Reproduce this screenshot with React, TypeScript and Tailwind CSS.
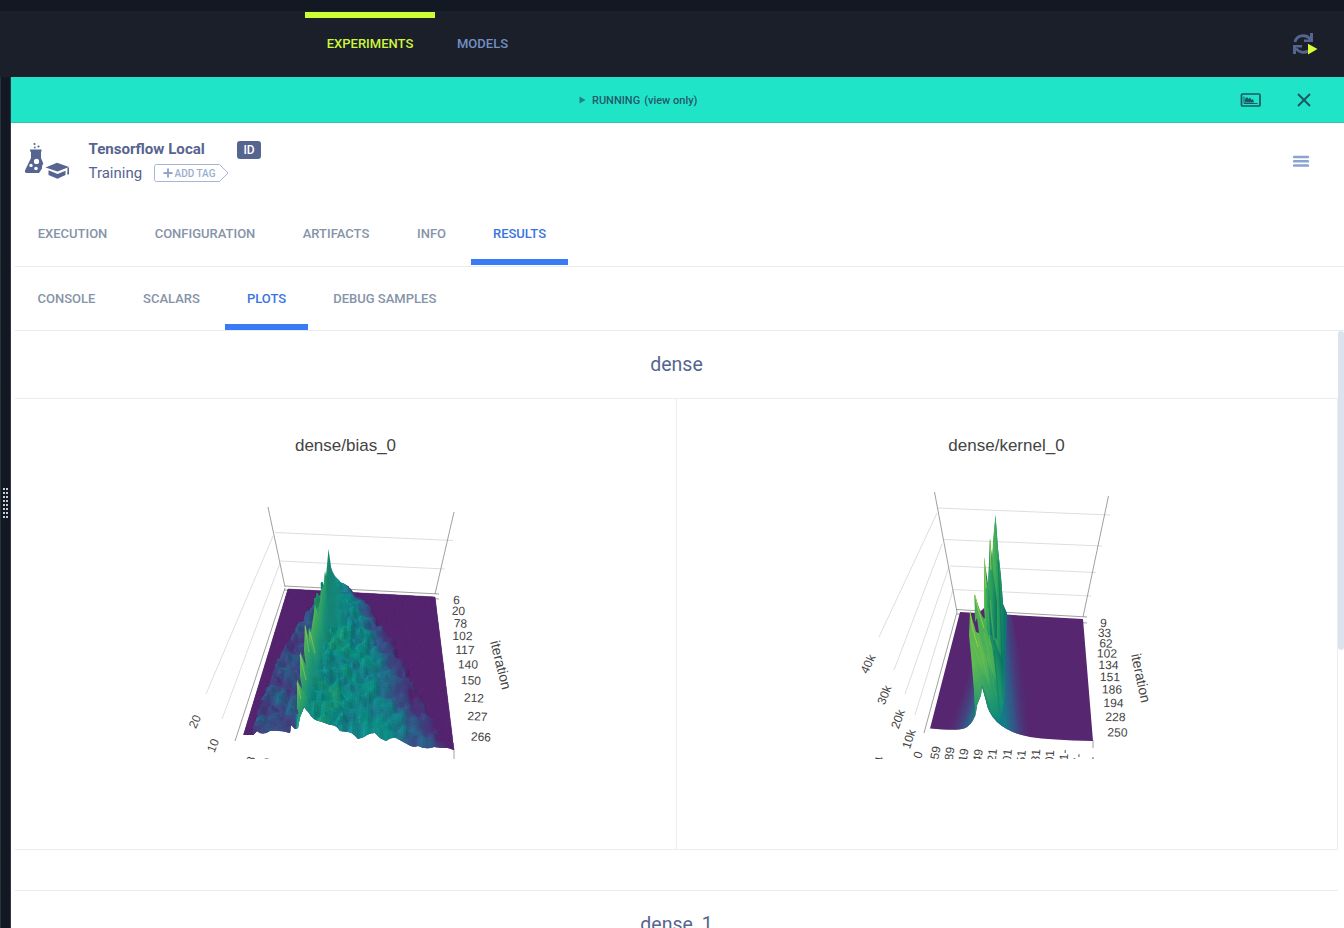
import React from 'react';

type Pt = [number, number];

const hash = (x: number, y: number) => {
  const s = Math.sin(x * 127.1 + y * 311.7) * 43758.5453;
  return s - Math.floor(s);
};
const noise = (x: number, y: number) => {
  const ix = Math.floor(x), iy = Math.floor(y);
  const fx = x - ix, fy = y - iy;
  const a = fx * fx * (3 - 2 * fx), b = fy * fy * (3 - 2 * fy);
  const top = hash(ix, iy) * (1 - a) + hash(ix + 1, iy) * a;
  const bot = hash(ix, iy + 1) * (1 - a) + hash(ix + 1, iy + 1) * a;
  return top * (1 - b) + bot * b;
};
const ramp = (stops: Pt[], x: number) => {
  if (x <= stops[0][0]) return stops[0][1];
  for (let i = 1; i < stops.length; i++) {
    if (x <= stops[i][0]) {
      const f = (x - stops[i - 1][0]) / (stops[i][0] - stops[i - 1][0]);
      return stops[i - 1][1] + f * (stops[i][1] - stops[i - 1][1]);
    }
  }
  return stops[stops.length - 1][1];
};

const SCALE = [[86, 38, 112], [70, 62, 128], [50, 94, 140], [24, 130, 142], [12, 150, 136], [52, 168, 100], [120, 200, 80]];
const color = (v: number, light: number) => {
  const p = Math.max(0, Math.min(0.999, v)) * (SCALE.length - 1);
  const i = Math.floor(p), f = p - i;
  const c = SCALE[i].map((a, k) => Math.round(Math.max(0, Math.min(255, (a + (SCALE[i + 1][k] - a) * f) * light))));
  return `rgb(${c[0]},${c[1]},${c[2]})`;
};

function buildSurface() {
  const rows = 74, cols = 92;
  const pts: Pt[][] = [];
  const vals: number[][] = [];
  for (let r = 0; r <= rows; r++) {
    const t = Math.pow(r / rows, 1.15);
    const left = ramp([[0, 326], [0.1, 313], [0.25, 299], [0.5, 278], [0.8, 259], [1, 251]], t);
    const right = ramp([[0, 354], [0.12, 378], [0.3, 396], [0.55, 418], [0.75, 433], [1, 462]], t);
    const k = 0.3 + 0.7 * Math.min(1, t * 2.6);
    const row: Pt[] = [];
    const vrow: number[] = [];
    for (let c = 0; c <= cols; c++) {
      const u = c / cols;
      const bx = (288 + u * 147) * (1 - t) + (243.5 + u * 210.5) * t;
      const by = (589 + u * 8) * (1 - t) + (735 + u * 15) * t;
      const ridge = 332 * (1 - t) + 308 * t;
      const n = noise(u * 36, t * 24);
      const n2 = noise(u * 50 + 9, t * 42);
      const n3 = noise(u * 14 + 31, t * 16 + 5);
      const d = bx - ridge;
      let v = 0, h = 0;
      if (bx > left + n * 9 && bx < right - n3 * 16) {
        if (d < 0) {
          const e = Math.min(1, (bx - left) / 9);
          v = (0.04 + 0.22 * n + 0.2 * n3) * e;
          h = (0.02 + 0.035 * n + 0.025 * n2) * e * k;
          if (d > -8) { v = 0.6 + 0.2 * n; h += 0.08 * (1 + d / 8) * k; }
        } else {
          const q = Math.min(1, d / (right - ridge));
          v = ramp([[0, 0.68], [0.3, 0.62], [0.5, 0.56], [0.66, 0.38], [0.8, 0.14], [1, 0.03]], q) + (n - 0.5) * 0.18 + (n3 - 0.5) * 0.2;
          h = (1 - q) * (0.09 + 0.035 * n + 0.045 * n2) + 0.018 * n * Math.min(1, (1 - q) * 5);
          h = h * k + 0.04 * Math.exp(-d / 7) * (0.5 + 0.5 * k);
        }
      }
      row.push([bx + (bx - 359) * h, by + (by - 911) * h]);
      vrow.push(v);
    }
    pts.push(row);
    vals.push(vrow);
  }
  pts.push(pts[rows].map(([x, y]): Pt => [x, y + 32]));
  vals.push(vals[rows]);
  const out: { d: string; f: string }[] = [];
  for (let r = 0; r <= rows; r++) {
    for (let c = 0; c < cols; c++) {
      const a = pts[r][c], b = pts[r][c + 1], e = pts[r + 1][c + 1], g = pts[r + 1][c];
      const v = (vals[r][c] + vals[r][c + 1] + vals[r + 1][c] + vals[r + 1][c + 1]) / 4;
      const slope = (b[1] - a[1]) * 0.035 + (r < rows ? (g[1] - a[1] - 2) * 0.018 : 0);
      const light = v < 0.01 ? 1 : Math.max(0.82, Math.min(1.13, 1 - slope));
      out.push({ d: `M${[a, b, e, g].map((p) => p[0].toFixed(1) + ' ' + p[1].toFixed(1)).join('L')}Z`, f: color(v, light) });
    }
  }
  return out;
}
const surface = buildSurface();

const AxisText = ({ x, y, r = 0, s = 12, children }: { x: number; y: number; r?: number; s?: number; children: React.ReactNode }) => (
  <text x={x} y={y} transform={`rotate(${r} ${x} ${y})`} textAnchor="middle" dominantBaseline="central" fontSize={s} fill="#444">
    {children}
  </text>
);

const biasSpikes = [
  'M323.500 592L325 571L326 576L328.500 549L332 573L335 581L341 591L348 606L344 628L322 626L316 612Z',
  'M318 622L321 590L323.500 586L325 571L328 610L330 640L322 640Z',
  'M311 632L315 605L319 616L324 632L331 660L316 660Z',
  'M308 648L309 628L313 638L320 657L326 680L311 676Z',
  'M304 650L305 624L309 640L314 658L320 686L308 684Z',
  'M300 676L300 652L303 659L309 674L318 699L304 700Z',
  'M297 708L297 680L300 686L307 697L316 718L309 713L304 707L300 717Z',
];
const biasFloor = 'M288 589L435 597L454 750L448 748Q440 748 434 747Q426 750 418 746Q412 748 407 744L396 738Q391 737 386 741L380 738L375 733Q369 733 364 737L358 739Q352 732 348 732L340 731Q336 724 330 725L322 722Q312 720 309 713L304 707L300 717L298 728L295 729L291 725L290 733Q280 730 270 731Q262 736 257 731L253 735L243.500 734.500Z';

function BiasPlot() {
  return (
    <svg className="block h-[450px] w-[661px]" viewBox="15 399 661 450" fontFamily='"Liberation Sans", Arial, sans-serif'>
      <defs>
        <clipPath id="biasFront"><path d="M230 530H440L454 750L448 748Q440 748 434 747Q426 750 418 746Q412 748 407 744L396 738Q391 737 386 741L380 738L375 733Q369 733 364 737L358 739Q352 732 348 732L340 731Q336 724 330 725L322 722Q312 720 309 713L304 707L300 717L298 728L295 729L291 725L290 733Q280 730 270 731Q262 736 257 731L253 735L230 735Z" /></clipPath>
        <clipPath id="biasPlotBox"><rect x="15" y="399" width="661" height="360" /></clipPath>
        <linearGradient id="spikeGreen" x1="0" x2="1" y1="0" y2="0.600">
          <stop offset="0" stopColor="#72c455" /><stop offset="0.300" stopColor="#3aa760" /><stop offset="0.700" stopColor="#188f78" stopOpacity="0.900" /><stop offset="1" stopColor="#148b84" stopOpacity="0.200" />
        </linearGradient>
        <linearGradient id="peakGreen" x1="0" x2="1" y1="0" y2="0.200">
          <stop offset="0" stopColor="#42ad62" /><stop offset="0.450" stopColor="#16836e" /><stop offset="1" stopColor="#138a86" stopOpacity="0.500" />
        </linearGradient>
      </defs>
      <text x="345.500" y="451" textAnchor="middle" fontSize="17" fill="#444">dense/bias_0</text>
      <g stroke="#dedede" fill="none">
        <path d="M275 532.500L453 540.500M280 561L445 569M273 536L206 694M280 563L222 719" />
      </g>
      <g stroke="#888" strokeWidth="0.800" fill="none">
        <path d="M268 507L285 587M454 512L435 594M285 586L439 594M284 590L439 599M285 588L235 741M454 748V759" />
      </g>
      <path d={biasFloor} fill="#562670" />
      <g clipPath="url(#biasFront)">
        {surface.map((q, i) => <path key={i} d={q.d} fill={q.f} stroke={q.f} strokeWidth="0.500" />)}
        {biasSpikes.map((d, i) => <path key={i} d={d} fill={i === 0 ? 'url(#peakGreen)' : 'url(#spikeGreen)'} />)}
        <path d="M305 626L309 652M300 655L306 680M297 683L301 699M310 632L315 653" stroke="#8bd058" strokeWidth="0.900" opacity="0.700" fill="none" />
      </g>
      <AxisText x={195} y={721.500} r={-65}>20</AxisText>
      <AxisText x={213} y={745.500} r={-68}>10</AxisText>
      <g clipPath="url(#biasPlotBox)">
        <AxisText x={251} y={760} r={-75}>8</AxisText>
        <AxisText x={268} y={761.500} r={-75}>0</AxisText>
      </g>
      <AxisText x={456.500} y={600} r={2}>6</AxisText>
      <AxisText x={458.500} y={611} r={2}>20</AxisText>
      <AxisText x={460.500} y={623.500} r={2}>78</AxisText>
      <AxisText x={462.500} y={636} r={2}>102</AxisText>
      <AxisText x={465} y={650} r={2}>117</AxisText>
      <AxisText x={468} y={664.500} r={2}>140</AxisText>
      <AxisText x={471} y={680.500} r={3}>150</AxisText>
      <AxisText x={474} y={698} r={3}>212</AxisText>
      <AxisText x={477.500} y={716.500} r={3}>227</AxisText>
      <AxisText x={481} y={737} r={3}>266</AxisText>
      <AxisText x={501} y={665} r={76} s={14}>iteration</AxisText>
    </svg>
  );
}

const kernelRight: [number, number, string][] = [
  [1103.5, 623, '9'], [1104.5, 633, '33'], [1106, 643.5, '62'], [1107, 653.5, '102'], [1108.5, 665, '134'],
  [1110, 677, '151'], [1112, 689.5, '186'], [1113.5, 703, '194'], [1115.5, 717, '228'], [1117.5, 732.5, '250'],
];
const kernelBottom: [number, number, string][] = [
  [935, 756, '159'], [949, 757, '189'], [963, 758, '119'], [977.5, 759, '149'], [992, 758.5, '121'], [1007, 759, '101'],
  [1021, 760, '151'], [1035.5, 759, '131'], [1049.5, 760, '101'], [1064, 757, '-1-'], [1078, 759, '7-'], [1092, 762, '7-'],
];

function KernelPlot() {
  return (
    <svg className="block h-[450px] w-[660px]" viewBox="677 399 660 450" fontFamily='"Liberation Sans", Arial, sans-serif'>
      <defs>
        <clipPath id="kernelPlotBox"><rect x="677" y="399" width="660" height="360" /></clipPath>
        <clipPath id="kernelFloor"><path d="M960 612L1083 619L1093 741Q1050 740 1030 737Q1009 733 997 722Q988 713 986 701L982 686L981 695L977 705L975 716Q971 726 964 728.500Q956 731 930 728.500Z" /></clipPath>
        <linearGradient id="tailBlue" gradientUnits="userSpaceOnUse" x1="986" y1="680" x2="1027" y2="676">
          <stop offset="0" stopColor="#087f7c" /><stop offset="0.350" stopColor="#157b88" /><stop offset="0.580" stopColor="#31598a" stopOpacity="0.900" /><stop offset="1" stopColor="#562670" stopOpacity="0" />
        </linearGradient>
        <linearGradient id="leftBlue" gradientUnits="userSpaceOnUse" x1="954" y1="700" x2="979" y2="708">
          <stop offset="0" stopColor="#562670" stopOpacity="0" /><stop offset="0.650" stopColor="#3b5288" stopOpacity="0.850" /><stop offset="1" stopColor="#168588" />
        </linearGradient>
        <linearGradient id="bodyGreen" gradientUnits="userSpaceOnUse" x1="971" y1="650" x2="1006" y2="642">
          <stop offset="0" stopColor="#62bb52" /><stop offset="0.300" stopColor="#46ad58" /><stop offset="0.530" stopColor="#2a9c5d" /><stop offset="0.750" stopColor="#0b7a67" /><stop offset="1" stopColor="#0d7678" />
        </linearGradient>
        <linearGradient id="bodyFront" gradientUnits="userSpaceOnUse" x1="985" y1="650" x2="991" y2="722">
          <stop offset="0.150" stopColor="#0b8b79" stopOpacity="0" /><stop offset="0.650" stopColor="#0b8b79" stopOpacity="0.550" /><stop offset="1" stopColor="#08857f" stopOpacity="0.950" />
        </linearGradient>
        <linearGradient id="needle" x1="0" x2="1" y1="0" y2="0.100">
          <stop offset="0" stopColor="#6cc250" /><stop offset="0.500" stopColor="#2ea35a" /><stop offset="1" stopColor="#087668" />
        </linearGradient>
      </defs>
      <text x="1006.500" y="451" textAnchor="middle" fontSize="17" fill="#444">dense/kernel_0</text>
      <g stroke="#dedede" fill="none">
        <path d="M938 508L1110 515M944 539.500L1102 546M950 566L1096 572.500M953 589.500L1091 596M937 513L879 637M942 544L894 670M949 567L905 694M953 590L915 715" />
      </g>
      <g stroke="#888" strokeWidth="0.800" fill="none">
        <path d="M934.500 492L957 612M1108.500 496L1083 617M956 609.500L1087 617M957 614L1087 623M957 612L924 733M1093 740V748" />
      </g>
      <g clipPath="url(#kernelFloor)">
        <path d="M925 605H1100V745H925Z" fill="#562670" />
        <path d="M1001 610L1011 613Q1020 665 1045 739L988 730L985 680Z" fill="url(#tailBlue)" />
        <path d="M971 660L979 670L982 710L970 732L946 731Q963 705 971 660Z" fill="url(#leftBlue)" />
      </g>
      <path d="M995.500 515L998 549L1001 577L1003 604L1007 613L1006 640L1004 700L999 722Q988 713 986 701L982 686L981 695L977 705L975.500 716L974 690L971 655L969 635L970 611L973 622L975 626L974.500 594L978 605L981 616L985 618L984 557L988 584L990 538L992 560Z" fill="url(#bodyGreen)" />
      <path d="M990 622L993 540L995.500 515L998 549L1001 577L1003 604L1006 613L1003 660L998 650Z" fill="url(#needle)" />
      <path d="M985 628L989 570L990 538L993 570L997 602L997 640Z" fill="url(#needle)" opacity="0.900" />
      <path d="M984 620L984 557L986 578L989 590L992 635L986 636Z" fill="url(#needle)" />
      <path d="M976 632L974.500 594L978 605L983 618L992 646L997 681L985 660Z" fill="#4baf56" />
      <path d="M970 638L970 611L973 624L979 633L988 667L991 690L980 665Z" fill="#5db852" />
      <path d="M974 624L976 632L979 633L977 618M980 612L985 619L984 608Z" fill="#562670" />
      <path d="M970 612L973 630L978 647M975 595L978 609L984 628M984.500 560L986 588M990 541L991 570" stroke="#a5cf43" strokeWidth="0.900" fill="none" />
      <path d="M973 642L983 675M978 638L988 682M984 632L995 682M990 600L994 640M988 608L990 646M987 655L996 696" stroke="#75c659" strokeWidth="0.800" opacity="0.500" fill="none" />
      <path d="M998 560L1001 625L1003 700M994 650L1000 714M982 686L990 710" stroke="#007061" strokeWidth="1.300" opacity="0.500" fill="none" />
      <path d="M971 630L1006 630L1004 700L999 723Q988 713 986 701L982 686L981 695L977 705L975.500 717Z" fill="url(#bodyFront)" />
      <AxisText x={868} y={664} r={-65}>40k</AxisText>
      <AxisText x={884.500} y={695} r={-68}>30k</AxisText>
      <AxisText x={898} y={719} r={-70}>20k</AxisText>
      <AxisText x={909} y={739} r={-72}>10k</AxisText>
      <AxisText x={918} y={755} r={-74}>0</AxisText>
      {kernelRight.map(([x, y, s]) => <AxisText key={s} x={x} y={y} r={2}>{s}</AxisText>)}
      <AxisText x={1141} y={678} r={78} s={14}>iteration</AxisText>
      <g clipPath="url(#kernelPlotBox)">
        <AxisText x={879.500} y={760} r={-80}>4</AxisText>
        {kernelBottom.map(([x, y, s], i) => <AxisText key={i} x={x} y={y} r={-80 - i * 0.8}>{s}</AxisText>)}
      </g>
    </svg>
  );
}

const TabItem = ({ label, cls, active = false }: { label: string; cls: string; active?: boolean }) => (
  <div className={`${cls} flex shrink-0 flex-col items-center ${active ? 'text-[#3b74e2]' : 'text-[#8693a8]'}`}>
    <span className="flex grow items-center">{label}</span>
    <span className={`h-[6px] w-full ${active ? 'bg-[#397bf6]' : ''}`} />
  </div>
);

export default function App() {
  return (
    <div className="flex h-[928px] w-[1344px] flex-col overflow-hidden bg-white font-['Roboto',sans-serif]">
      <header className="flex h-[77px] shrink-0 flex-col bg-[#1a1f2a]">
        <div className="h-[11px] bg-[#131922]" />
        <div className="flex grow items-start pt-px pl-[305px] text-[13px] font-medium">
          <div className="flex w-[130px] flex-col items-center text-[#cdf53c]">
            <span className="h-[6px] w-full bg-[#cdff35]" />
            <span className="mt-[16px] leading-5">EXPERIMENTS</span>
          </div>
          <span className="mt-[22px] ml-[22px] leading-5 text-[#7290c4]">MODELS</span>
          <svg className="mt-[20px] mr-[26px] ml-auto h-6 w-[26px]" viewBox="1292 32 26 24" fill="none">
            <path d="M1295 42C1296.500 35 1306 33.500 1310.500 39.500" stroke="#56658f" strokeWidth="2.800" />
            <path d="M1313 33V42H1304V39.500H1310V33Z" fill="#56658f" />
            <path d="M1293 54V45H1302V47.500H1296V54Z" fill="#56658f" />
            <path d="M1296 48.500C1299 52.500 1304 53.500 1308 51" stroke="#56658f" strokeWidth="2.800" />
            <path d="M1308 43.800L1317.500 49L1308 54.500Z" fill="#d8ff36" />
          </svg>
        </div>
      </header>
      <div className="flex min-h-0 grow">
        <aside className="flex w-[11px] shrink-0 items-center border-r border-l border-r-[#2a3946] border-l-[#243541] bg-[#141823] pt-[2px] pl-[2px]">
          <svg className="h-[31px] w-[6px]" viewBox="0 0 6 31" fill="#c9ccd3">
            {[0, 4, 8, 12, 16, 20, 24, 28].map((y) => <path key={y} d={`M0 ${y}h2v2h-2zM3 ${y}h2v2h-2z`} />)}
          </svg>
        </aside>
        <main className="flex min-w-0 grow flex-col">
          <div className="flex h-[46px] shrink-0 items-center border-b border-[#35c5ad] bg-[#20e4c8] text-[11px] font-medium text-[#22596a]">
            <svg className="ml-[568px] h-[8px] w-[7px]" viewBox="0 0 7 8"><path d="M0.500 0.500L6.500 4L0.500 7.500Z" fill="#21808a" /></svg>
            <span className="ml-[6px] pt-[4px]">RUNNING</span>
            <span className="ml-[4px] pt-[4px]">(view only)</span>
            <svg className="mr-[35px] ml-auto h-[14px] w-[21px]" viewBox="0 0 21 14" fill="none">
              <rect x="1.500" y="1" width="18.500" height="12" rx="1" stroke="#1a5862" strokeWidth="1.700" />
              <path d="M4 3.500V10.500H17.500" stroke="#1a5862" />
              <path d="M5 9.500V6L7 4L8.500 6L10 4.500L11.500 7L13 6L14 9.500Z" fill="#1a5862" />
            </svg>
            <svg className="mr-[32px] h-[16px] w-[16px]" viewBox="0 0 16 16"><path d="M2 2L14 14M14 2L2 14" stroke="#1a5862" strokeWidth="2" /></svg>
          </div>
          <div className="flex h-[78px] shrink-0 items-start">
            <svg className="mt-[17px] ml-[12px] h-[42px] w-[48px]" viewBox="23 140 48 42" fill="#56658f">
              <circle cx="34.500" cy="144" r="1.100" /><circle cx="38.500" cy="146.500" r="1.100" /><circle cx="34.800" cy="147.500" r="0.900" />
              <path fillRule="evenodd" d="M30 149.500H41.500V151.500H41V158L43.300 163.500Q41.500 166 42 168.500L39 173H27Q24 173 25.200 170L31 158V151.500H30ZM36.500 158.800A2.600 2.600 0 1 0 36.500 164A2.600 2.600 0 0 0 36.500 158.800ZM31 163.700A1.700 1.700 0 1 0 31 167.100A1.700 1.700 0 0 0 31 163.700ZM36 166.700A1.800 1.800 0 1 0 36 170.300A1.800 1.800 0 0 0 36 166.700Z" />
              <path d="M45.500 167.500L57 162.800L69 167L57.500 171.500Z" />
              <path d="M48.500 170.300L57.500 174L65.500 170.800V175L57.500 178.800L48.500 175Z" />
              <path d="M67.500 167.500H69V174.500H67.300Z" />
            </svg>
            <div className="ml-[17.500px] flex flex-col pt-[14px] text-[#56658f]">
              <div className="flex h-6 items-center">
                <span className="w-[148.500px] text-[15.100px] font-bold">Tensorflow Local</span>
                <span className="mt-[1px] flex h-[18px] w-6 items-center justify-center rounded-[3px] bg-[#56658f] text-[12px] font-medium text-white">ID</span>
              </div>
              <div className="flex h-6 items-center">
                <span className="w-[65px] text-[15px]">Training</span>
                <span className="relative flex h-[18px] w-[75px] items-center pl-[9px] text-[10px] font-medium text-[#9cadd0]">
                  <svg className="absolute inset-0 h-[18px] w-[75px]" viewBox="0 0 75 18" fill="none">
                    <path d="M2.500 0.500H65.500L74 9L65.500 17.500H2.500Q0.500 17.500 0.500 15.500V2.500Q0.500 0.500 2.500 0.500Z" stroke="#a7b6d8" />
                    <path d="M9.500 9H18.500M14 4.500V13.500" stroke="#91a4c9" strokeWidth="1.900" />
                  </svg>
                  <span className="ml-[12px] whitespace-nowrap">ADD TAG</span>
                </span>
              </div>
            </div>
            <svg className="mt-[32px] mr-[35px] ml-auto h-[13px] w-[16px]" viewBox="0 0 16 13"><path d="M1 2H15M1 6.300H15M1 10.600H15" stroke="#8ba3d0" strokeWidth="2.500" strokeLinecap="round" /></svg>
          </div>
          <nav className="ml-[4px] flex h-[66px] shrink-0 gap-[3px] border-b border-[#e8eaee] text-[13px] font-medium">
            <TabItem label="EXECUTION" cls="w-[115px] pt-[6px]" />
            <TabItem label="CONFIGURATION" cls="w-[144px] pt-[6px]" />
            <TabItem label="ARTIFACTS" cls="w-[112px] pt-[6px]" />
            <TabItem label="INFO" cls="w-[73px] pt-[6px]" />
            <div className="flex pb-px"><TabItem label="RESULTS" cls="w-[97px] pt-[7px]" active /></div>
          </nav>
          <nav className="ml-[4px] flex h-[64px] shrink-0 gap-[3px] border-b border-[#e8eaee] text-[13px] font-medium">
            <TabItem label="CONSOLE" cls="w-[103px] pt-[6px]" />
            <TabItem label="SCALARS" cls="w-[101px] pt-[6px]" />
            <TabItem label="PLOTS" cls="w-[83px] pt-[6px]" active />
            <TabItem label="DEBUG SAMPLES" cls="w-[147.500px] pt-[6px]" />
          </nav>
          <div className="flex min-h-0 grow">
            <section className="ml-[4px] flex w-[1323px] shrink-0 flex-col text-[19.500px] text-[#56658f]">
              <h2 className="flex h-[67px] shrink-0 items-center justify-center">dense</h2>
              <div className="flex h-[452px] shrink-0 border-y border-r border-[#ebedf0]">
                <div className="w-[662px] border-r border-[#ebedf0]"><BiasPlot /></div>
                <KernelPlot />
              </div>
              <div className="h-[41px] shrink-0 border-b border-[#e8eaee]" />
              <h2 className="flex h-[66px] shrink-0 items-center justify-center pt-[2px]">dense_1</h2>
            </section>
            <div className="h-[319px] w-[6px] rounded-[3px] bg-[#dce2ee]" />
          </div>
        </main>
      </div>
    </div>
  );
}
